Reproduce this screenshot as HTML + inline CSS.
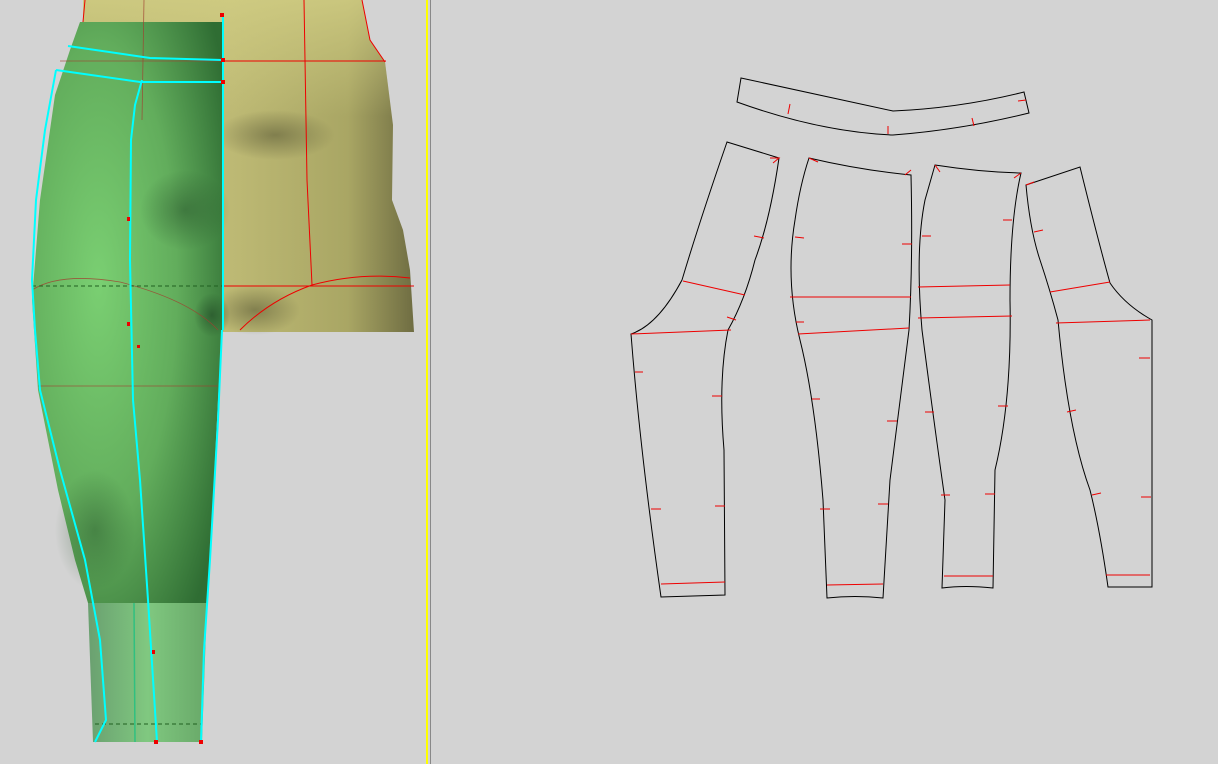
<!DOCTYPE html>
<html><head><meta charset="utf-8"><style>
html,body{margin:0;padding:0;background:#d3d3d3;width:1218px;height:764px;overflow:hidden}
svg{display:block}
</style></head><body>
<svg width="1218" height="764" viewBox="0 0 1218 764" xmlns="http://www.w3.org/2000/svg">
<defs>
<linearGradient id="yl" x1="0" y1="0" x2="1" y2="0">
<stop offset="0" stop-color="#b3b06c"/><stop offset="0.45" stop-color="#bdb974"/><stop offset="0.8" stop-color="#a9a664"/><stop offset="1" stop-color="#6f6d42"/>
</linearGradient>
<linearGradient id="yt" x1="0" y1="0" x2="0" y2="1">
<stop offset="0" stop-color="#d2ce84" stop-opacity="0.8"/><stop offset="0.35" stop-color="#d2ce84" stop-opacity="0"/>
</linearGradient>
<radialGradient id="gr" cx="0.35" cy="0.45" r="0.75">
<stop offset="0" stop-color="#7acf72"/><stop offset="0.55" stop-color="#62ad5c"/><stop offset="1" stop-color="#2f6d33"/>
</radialGradient>
<linearGradient id="gl" x1="0" y1="0" x2="1" y2="0">
<stop offset="0" stop-color="#6aa070"/><stop offset="0.5" stop-color="#80c880"/><stop offset="1" stop-color="#68a868"/>
</linearGradient>
<radialGradient id="sh" cx="0.5" cy="0.5" r="0.5">
<stop offset="0" stop-color="#5d5c38" stop-opacity="0.6"/><stop offset="1" stop-color="#5d5c38" stop-opacity="0"/>
</radialGradient>
<radialGradient id="gs" cx="0.5" cy="0.5" r="0.5">
<stop offset="0" stop-color="#244f28" stop-opacity="0.7"/><stop offset="1" stop-color="#244f28" stop-opacity="0"/>
</radialGradient>
</defs>
<rect width="1218" height="764" fill="#d3d3d3"/>
<!-- torso -->
<path d="M83,0 L362,0 L370,40 L385,62 L393,125 L392,200 L403,230 L410,270 L414,332 L222,332 L222,22 L83,22 Z" fill="url(#yl)"/>
<path d="M83,0 L362,0 L370,40 L385,62 L393,125 L392,200 L403,230 L410,270 L414,332 L222,332 L222,22 L83,22 Z" fill="url(#yt)"/>
<ellipse cx="275" cy="135" rx="60" ry="25" fill="url(#sh)"/>
<ellipse cx="255" cy="310" rx="45" ry="25" fill="url(#sh)"/>
<!-- green legging upper -->
<path d="M80,22 L222,22 L222,330 L218,400 L213,500 L207,603 L88,603 L75,560 L58,490 L38,390 L32,300 L40,200 L55,95 L70,50 Z" fill="url(#gr)"/>
<ellipse cx="185" cy="210" rx="45" ry="40" fill="url(#gs)" opacity="0.7"/>
<ellipse cx="212" cy="315" rx="18" ry="22" fill="url(#gs)"/>
<ellipse cx="95" cy="530" rx="40" ry="60" fill="url(#gs)" opacity="0.6"/>
<path d="M88,603 L207,603 L202,742 L93,742 Z" fill="url(#gl)"/>
<!-- red lines on torso -->
<g stroke="#e00" stroke-width="1" fill="none">
<path d="M85,0 L83,22"/><path d="M304,0 L305,60 L307,180 L312,285"/>
<path d="M222,61 L386,61"/><path d="M222,286 L414,286"/>
<path d="M240,330 Q270,300 312,285 Q360,272 410,278"/>
<path d="M362,0 L370,40 L385,62"/>
</g>
<g stroke="#a04030" stroke-width="0.8" fill="none" opacity="0.8">
<path d="M32,290 Q60,272 120,282 Q190,300 218,330"/><path d="M38,386 L218,386"/><path d="M60,61 L222,61"/><path d="M144,0 L142,120"/>
</g>
<path d="M32,286 L222,286" stroke="#206020" stroke-width="1" stroke-dasharray="4,3"/>
<path d="M95,724 L202,724" stroke="#206020" stroke-width="1" stroke-dasharray="4,3"/>
<!-- cyan lines -->
<g stroke="#00ffff" stroke-width="2" fill="none">
<path d="M223,16 L223,330"/>
<path d="M68,46 L150,58 L222,60"/>
<path d="M56,70 L140,82 L222,82"/>
<path d="M142,80 L135,105 L131,140 L130,260 L133,400 L140,480 L148,600 L157,742"/>
<path d="M56,70 L45,130 L36,200 L32,280 L35,330 L40,390 L60,470 L85,560 L100,640 L106,720 L95,742"/>
<path d="M222,330 L218,420 L210,560 L204,650 L201,742"/>
</g>
<path d="M134,603 L135,742" stroke="#30c080" stroke-width="1.5"/>
<g fill="#e00">
<rect x="220" y="13" width="4" height="4"/><rect x="221" y="58" width="4" height="4"/><rect x="221" y="80" width="4" height="4"/>
<rect x="127" y="217" width="3" height="4"/><rect x="127" y="322" width="3" height="4"/><rect x="137" y="345" width="3" height="3"/>
<rect x="152" y="650" width="3" height="4"/><rect x="154" y="740" width="4" height="4"/><rect x="199" y="740" width="4" height="4"/>
</g>
<!-- divider -->
<rect x="426" y="0" width="2" height="764" fill="#ffff00"/>
<rect x="430" y="0" width="1" height="764" fill="#888"/>
<!-- pattern pieces -->
<g stroke="#000" stroke-width="1" fill="none">
<path d="M741,78 Q820,95 893,111 Q960,108 1024,92 L1029,113 Q960,130 893,135 Q820,132 737,102 Z"/>
<path d="M727,142 L779,158 Q770,220 755,260 Q745,300 728,330 Q718,380 724,450 L725,595 L661,597 Q640,450 631,334 Q658,325 682,280 Q700,220 727,142 Z"/>
<path d="M809,158 Q860,170 911,175 Q913,260 909,330 Q900,400 890,480 L883,598 Q855,595 827,598 L823,500 Q815,400 800,340 Q785,280 795,220 Q800,185 809,158 Z"/>
<path d="M935,165 Q980,172 1021,173 Q1010,220 1010,300 Q1012,400 995,470 L993,588 Q965,585 942,588 L945,500 Q935,430 922,330 Q915,250 925,200 Z"/>
<path d="M1026,185 L1080,167 Q1098,240 1110,283 Q1125,305 1152,320 L1152,587 L1108,587 Q1100,530 1090,490 Q1068,430 1058,320 Q1050,290 1040,260 Q1030,230 1026,185 Z"/>
</g>
<g stroke="#e00" stroke-width="1" fill="none">
<path d="M683,281 L745,295"/><path d="M631,334 L731,330"/><path d="M661,584 L725,582"/>
<path d="M790,297 L911,297"/><path d="M798,334 L909,328"/><path d="M827,585 L883,584"/>
<path d="M918,287 L1010,285"/><path d="M918,318 L1012,316"/><path d="M944,576 L993,576"/>
<path d="M1050,292 L1110,282"/><path d="M1056,323 L1150,320"/><path d="M1106,575 L1150,575"/>
<path d="M790,104 L788,114"/><path d="M888,126 L888,134"/><path d="M972,118 L974,126"/><path d="M1018,101 L1026,100"/>
<path d="M770,158 L779,158 L773,163"/><path d="M754,236 L764,238"/><path d="M727,317 L736,320"/><path d="M635,372 L643,372"/><path d="M712,396 L722,396"/><path d="M651,509 L661,509"/><path d="M715,506 L725,506"/>
<path d="M818,162 L809,158"/><path d="M905,175 L911,170"/><path d="M795,237 L804,238"/><path d="M902,244 L912,244"/><path d="M796,322 L804,322"/><path d="M812,399 L820,399"/><path d="M887,421 L897,421"/><path d="M820,509 L830,509"/><path d="M878,504 L888,504"/>
<path d="M940,172 L935,165"/><path d="M1014,178 L1021,173"/><path d="M922,236 L931,236"/><path d="M1003,220 L1012,220"/><path d="M925,412 L934,412"/><path d="M998,406 L1008,406"/><path d="M941,495 L950,495"/><path d="M985,494 L995,494"/>
<path d="M1034,182 L1026,185"/><path d="M1034,232 L1043,230"/><path d="M1139,358 L1150,358"/><path d="M1067,412 L1076,410"/><path d="M1092,495 L1101,493"/><path d="M1141,497 L1151,497"/>
</g>
</svg>
</body></html>
